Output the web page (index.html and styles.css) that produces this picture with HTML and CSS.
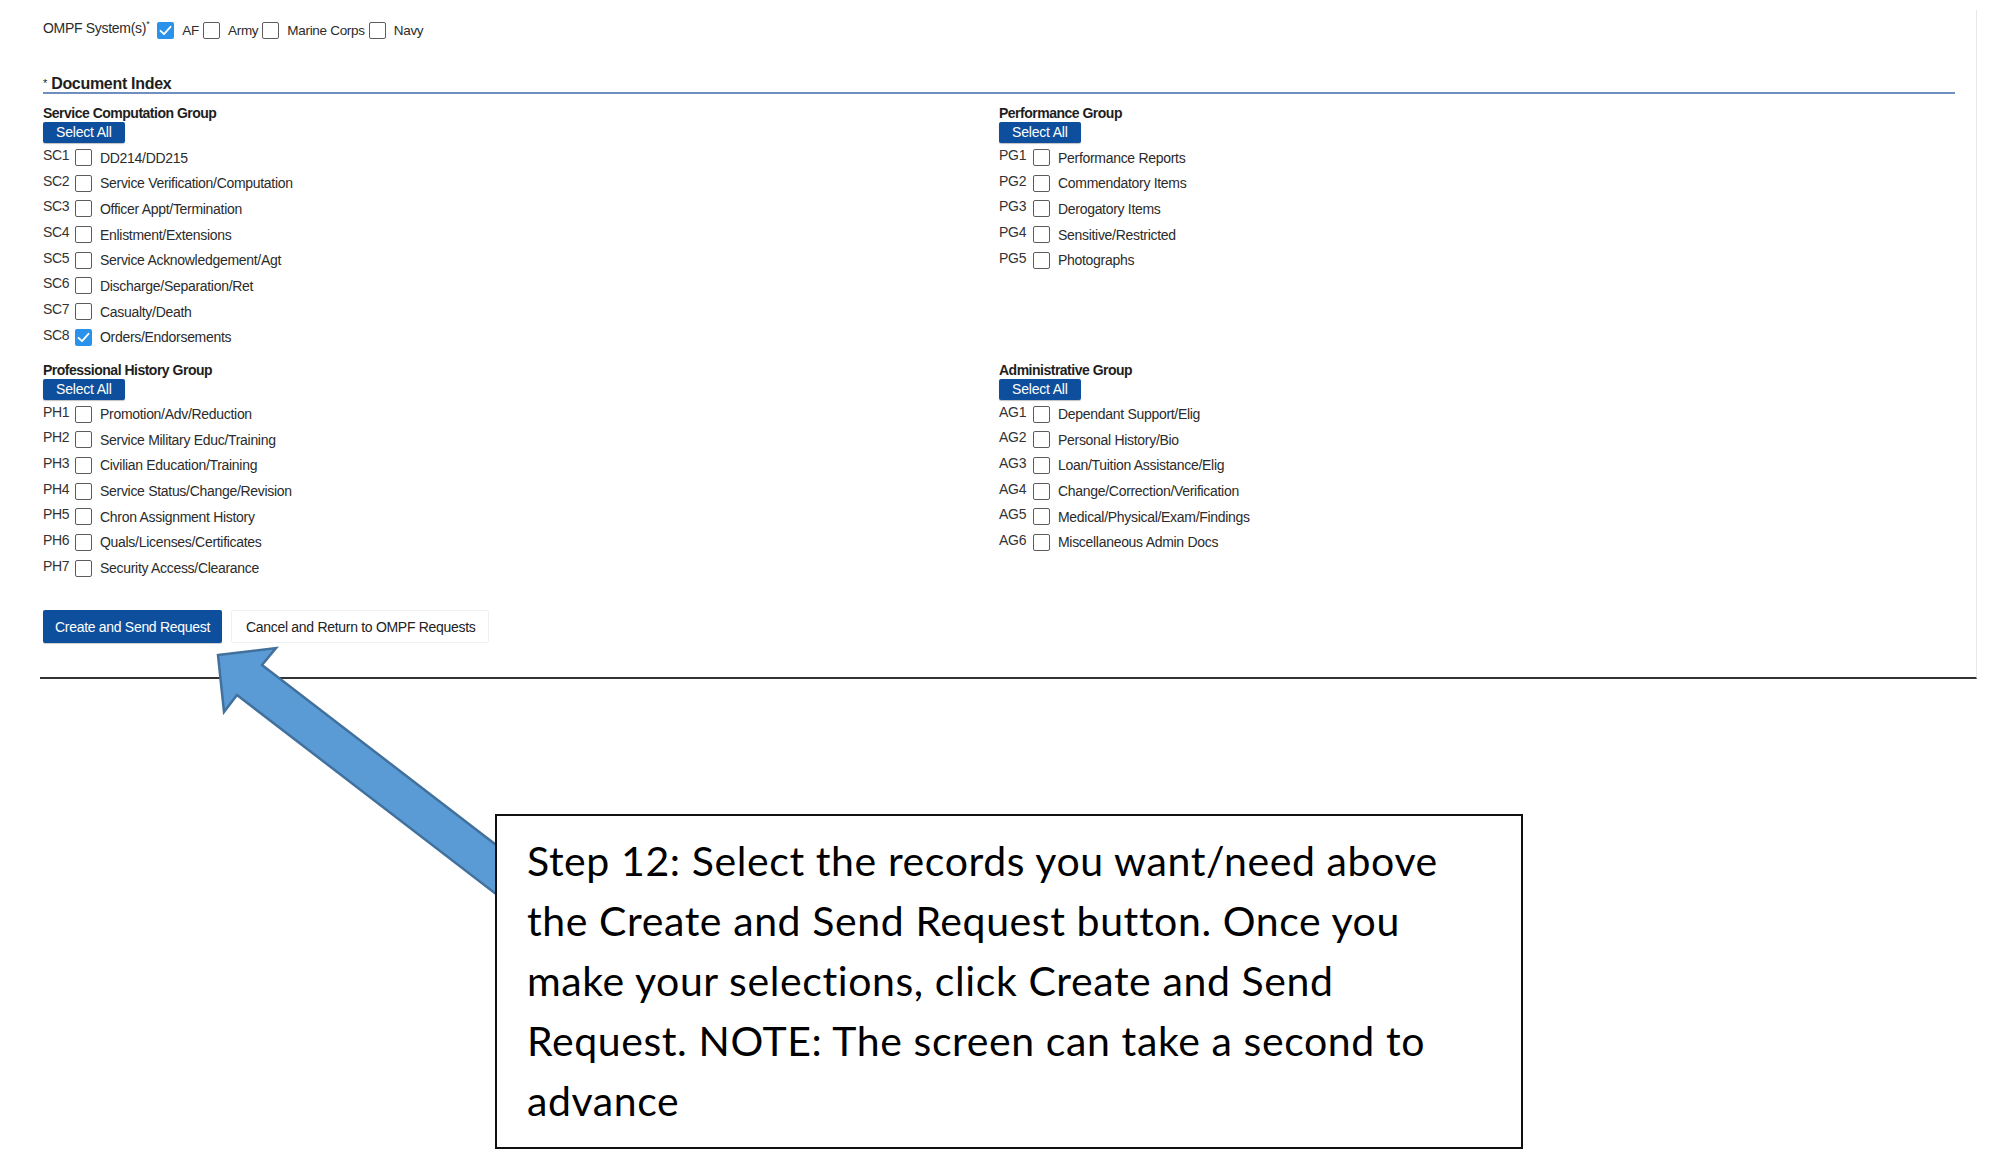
FILE: index.html
```html
<!DOCTYPE html>
<html lang="en">
<head>
<meta charset="utf-8">
<title>OMPF Request</title>
<link rel="stylesheet" href="styles.css">
</head>
<body>
<div class="page">
  <div class="panel">
    <div class="systems">
      <span class="sys-label">OMPF System(s)<sup class="req">*</sup></span>
      <span class="sys-item"><span class="cb checked"><svg viewBox="0 0 17 17" width="17" height="17"><polyline points="3.5,8.8 7,12.2 13.5,4.8" fill="none" stroke="#fff" stroke-width="1.8" stroke-linecap="round" stroke-linejoin="round"/></svg></span><span class="sys-text">AF</span></span>
      <span class="sys-item"><span class="cb"></span><span class="sys-text">Army</span></span>
      <span class="sys-item"><span class="cb"></span><span class="sys-text">Marine Corps</span></span>
      <span class="sys-item"><span class="cb"></span><span class="sys-text">Navy</span></span>
    </div>

    <div class="doc-index"><span class="req-star">*</span> Document Index</div>

    <div class="groups">
      <div class="group col-left">
        <div class="group-title">Service Computation Group</div>
        <button class="select-all">Select All</button>
        <div class="rows">
          <div class="row"><span class="code">SC1</span><span class="cb"></span><span class="label">DD214/DD215</span></div>
          <div class="row"><span class="code">SC2</span><span class="cb"></span><span class="label">Service Verification/Computation</span></div>
          <div class="row"><span class="code">SC3</span><span class="cb"></span><span class="label">Officer Appt/Termination</span></div>
          <div class="row"><span class="code">SC4</span><span class="cb"></span><span class="label">Enlistment/Extensions</span></div>
          <div class="row"><span class="code">SC5</span><span class="cb"></span><span class="label">Service Acknowledgement/Agt</span></div>
          <div class="row"><span class="code">SC6</span><span class="cb"></span><span class="label">Discharge/Separation/Ret</span></div>
          <div class="row"><span class="code">SC7</span><span class="cb"></span><span class="label">Casualty/Death</span></div>
          <div class="row"><span class="code">SC8</span><span class="cb checked"><svg viewBox="0 0 17 17" width="17" height="17"><polyline points="3.5,8.8 7,12.2 13.5,4.8" fill="none" stroke="#fff" stroke-width="1.8" stroke-linecap="round" stroke-linejoin="round"/></svg></span><span class="label">Orders/Endorsements</span></div>
        </div>
      </div>

      <div class="group col-right">
        <div class="group-title">Performance Group</div>
        <button class="select-all">Select All</button>
        <div class="rows">
          <div class="row"><span class="code">PG1</span><span class="cb"></span><span class="label">Performance Reports</span></div>
          <div class="row"><span class="code">PG2</span><span class="cb"></span><span class="label">Commendatory Items</span></div>
          <div class="row"><span class="code">PG3</span><span class="cb"></span><span class="label">Derogatory Items</span></div>
          <div class="row"><span class="code">PG4</span><span class="cb"></span><span class="label">Sensitive/Restricted</span></div>
          <div class="row"><span class="code">PG5</span><span class="cb"></span><span class="label">Photographs</span></div>
        </div>
      </div>

      <div class="group col-left">
        <div class="group-title">Professional History Group</div>
        <button class="select-all">Select All</button>
        <div class="rows">
          <div class="row"><span class="code">PH1</span><span class="cb"></span><span class="label">Promotion/Adv/Reduction</span></div>
          <div class="row"><span class="code">PH2</span><span class="cb"></span><span class="label">Service Military Educ/Training</span></div>
          <div class="row"><span class="code">PH3</span><span class="cb"></span><span class="label">Civilian Education/Training</span></div>
          <div class="row"><span class="code">PH4</span><span class="cb"></span><span class="label">Service Status/Change/Revision</span></div>
          <div class="row"><span class="code">PH5</span><span class="cb"></span><span class="label">Chron Assignment History</span></div>
          <div class="row"><span class="code">PH6</span><span class="cb"></span><span class="label">Quals/Licenses/Certificates</span></div>
          <div class="row"><span class="code">PH7</span><span class="cb"></span><span class="label">Security Access/Clearance</span></div>
        </div>
      </div>

      <div class="group col-right">
        <div class="group-title">Administrative Group</div>
        <button class="select-all">Select All</button>
        <div class="rows">
          <div class="row"><span class="code">AG1</span><span class="cb"></span><span class="label">Dependant Support/Elig</span></div>
          <div class="row"><span class="code">AG2</span><span class="cb"></span><span class="label">Personal History/Bio</span></div>
          <div class="row"><span class="code">AG3</span><span class="cb"></span><span class="label">Loan/Tuition Assistance/Elig</span></div>
          <div class="row"><span class="code">AG4</span><span class="cb"></span><span class="label">Change/Correction/Verification</span></div>
          <div class="row"><span class="code">AG5</span><span class="cb"></span><span class="label">Medical/Physical/Exam/Findings</span></div>
          <div class="row"><span class="code">AG6</span><span class="cb"></span><span class="label">Miscellaneous Admin Docs</span></div>
        </div>
      </div>
    </div>

    <div class="actions">
      <button class="btn btn-primary">Create and Send Request</button>
      <button class="btn btn-secondary">Cancel and Return to OMPF Requests</button>
    </div>
  </div>

  <svg class="arrow" width="2000" height="1168" viewBox="0 0 2000 1168">
    <polygon points="218,655 276,648 262,665 560,894 535,924 237,695 224,712" fill="#5b9bd5" stroke="#41719c" stroke-width="2.5" stroke-linejoin="miter"/>
  </svg>

  <div class="callout">Step 12: Select the records you want/need above<br>the Create and Send Request button. Once you<br>make your selections, click Create and Send<br>Request. NOTE: The screen can take a second to<br>advance</div>
</div>
</body>
</html>
```

FILE: styles.css
```css
html, body {
  margin: 0;
  padding: 0;
  background: #ffffff;
}

body {
  font-family: "Liberation Sans", Arial, sans-serif;
  color: #2b2b2b;
}

.page {
  position: relative;
  width: 2000px;
  height: 1168px;
  overflow: hidden;
}

.panel {
  box-sizing: border-box;
  width: 1937px;
  margin: 10px 0 0 40px;
  padding: 11px 0 34px 3px;
  border-right: 1px solid #e8e8e8;
  border-bottom: 2px solid #333333;
}

/* OMPF systems row */
.systems {
  display: flex;
  align-items: center;
  height: 18px;
  font-size: 14px;
  letter-spacing: -0.3px;
}

.sys-label {
  margin-right: 8px;
  position: relative;
  top: -2px;
}

.req {
  font-size: 9px;
  vertical-align: top;
  position: relative;
  top: -1px;
}

.sys-item {
  display: flex;
  align-items: center;
  margin-right: 4px;
}

.sys-text {
  margin-left: 8px;
  font-size: 13.5px;
}

/* checkbox */
.cb {
  display: inline-block;
  flex: 0 0 auto;
  box-sizing: border-box;
  width: 17px;
  height: 17px;
  border: 1.5px solid #5c5c5c;
  border-radius: 2px;
  background: #ffffff;
}

.cb.checked {
  border: none;
  background: #2a92ea;
}

.cb svg {
  display: block;
}

/* Document index heading */
.doc-index {
  margin: 36px 21px 0 0;
  font-size: 16px;
  font-weight: bold;
  line-height: 17px;
  letter-spacing: -0.3px;
  color: #1e1e1e;
  border-bottom: 2px solid #6f8fc0;
}

.req-star {
  font-size: 11px;
  font-weight: normal;
  vertical-align: top;
}

/* groups grid */
.groups {
  display: grid;
  grid-template-columns: 956px 1fr;
  row-gap: 10px;
  margin-top: 11px;
}

.group-title {
  font-size: 14px;
  font-weight: bold;
  line-height: 16px;
  letter-spacing: -0.5px;
  color: #1e1e1e;
}

.select-all {
  display: block;
  margin-top: 1px;
  padding: 0 13px;
  height: 21px;
  border: none;
  border-radius: 2px;
  background: #0d4f9c;
  color: #ffffff;
  font-family: "Liberation Sans", Arial, sans-serif;
  font-size: 14px;
  letter-spacing: -0.2px;
  line-height: 21px;
  box-shadow: 0 1px 1px rgba(0, 0, 0, 0.25);
}

.rows {
  margin-top: 3px;
}

.row {
  display: flex;
  align-items: flex-start;
  height: 25.7px;
  font-size: 14px;
  letter-spacing: -0.3px;
  line-height: 16px;
}

.code {
  width: 32px;
  flex: 0 0 auto;
  padding-top: 1px;
  color: #333333;
}

.col-right .code {
  width: 34px;
}

.row .cb {
  margin-top: 3px;
}

.label {
  margin-left: 8px;
  padding-top: 3.5px;
  color: #2b2b2b;
}

/* action buttons */
.actions {
  display: flex;
  gap: 9px;
  margin-top: 28px;
}

.btn {
  height: 33px;
  border-radius: 2px;
  font-family: "Liberation Sans", Arial, sans-serif;
  font-size: 14px;
  letter-spacing: -0.3px;
  cursor: pointer;
}

.btn-primary {
  padding: 0 12px;
  border: none;
  background: #0d4f9c;
  color: #ffffff;
  box-shadow: 0 1px 1px rgba(0, 0, 0, 0.2);
}

.btn-secondary {
  padding: 0 13px 0 14px;
  border: 1px solid #f0f0f0;
  background: #ffffff;
  color: #222222;
}

/* annotation overlay */
.arrow {
  position: absolute;
  left: 0;
  top: 0;
  z-index: 1;
  pointer-events: none;
}

.callout {
  position: absolute;
  left: 495px;
  top: 814px;
  z-index: 2;
  box-sizing: border-box;
  width: 1028px;
  height: 335px;
  padding: 15px 0 0 30px;
  border: 2px solid #111111;
  background: #ffffff;
  font-family: Lato, "Open Sans", sans-serif;
  font-size: 41px;
  letter-spacing: 0.6px;
  line-height: 60px;
  color: #000000;
  white-space: nowrap;
}
```
